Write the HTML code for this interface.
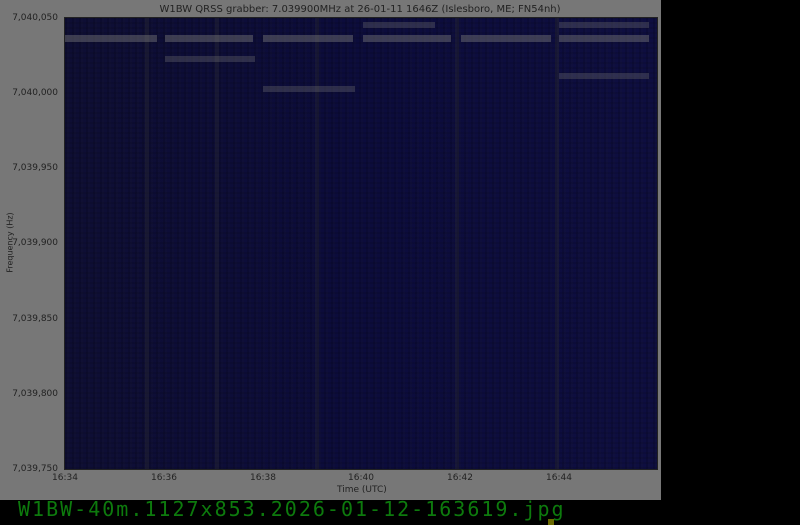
<!DOCTYPE html>
<html><head><meta charset="utf-8"><style>
html,body{margin:0;padding:0;background:#000;width:800px;height:525px;overflow:hidden;font-family:"DejaVu Sans","Liberation Sans",sans-serif}
#panel{position:absolute;left:0;top:0;width:661px;height:500px;background:#777}
#plot{position:absolute;left:64px;top:17px;width:592px;height:451px;border:1px solid #222;overflow:hidden;
background-image:repeating-linear-gradient(90deg,rgba(0,0,0,0.12) 0 2px,rgba(40,40,40,0.08) 2px 4px,transparent 4px 7px),repeating-linear-gradient(0deg,rgba(0,0,0,0.1) 0 2px,transparent 2px 5px),linear-gradient(90deg,#0e0e34,#0c0c3c 50%,#0e0e40)}
.t{position:absolute;font-size:9px;color:#222}
.yl{position:absolute;left:0;width:58px;text-align:right;font-size:9px;color:#222}
.xl{position:absolute;top:473px;font-size:9px;color:#222;transform:translateX(-50%)}
.band{position:absolute;background:rgba(120,120,120,0.45);height:7px}
.vs{position:absolute;top:0;height:451px;width:4px;background:rgba(50,50,50,0.3)}
#fn{position:absolute;left:18px;top:497px;font-family:"DejaVu Sans Mono","Liberation Mono",monospace;font-size:20px;color:#0d7a0d;letter-spacing:2px}
</style></head><body>
<div id="panel">
<div class="t" style="left:0;width:720px;text-align:center;top:4px;font-size:10px">W1BW QRSS grabber: 7.039900MHz at 26-01-11 1646Z (Islesboro, ME; FN54nh)</div>
<div id="plot">
<div class="vs" style="left:80px"></div><div class="vs" style="left:150px"></div><div class="vs" style="left:250px"></div><div class="vs" style="left:390px"></div><div class="vs" style="left:490px"></div>
<div class="band" style="left:0;top:17px;width:92px"></div>
<div class="band" style="left:100px;top:17px;width:88px"></div>
<div class="band" style="left:198px;top:17px;width:90px"></div>
<div class="band" style="left:298px;top:17px;width:88px"></div>
<div class="band" style="left:396px;top:17px;width:90px"></div>
<div class="band" style="left:494px;top:17px;width:90px"></div>
<div class="band" style="left:298px;top:4px;width:72px;height:6px;opacity:.7"></div>
<div class="band" style="left:494px;top:4px;width:90px;height:6px;opacity:.7"></div>
<div class="band" style="left:100px;top:38px;width:90px;height:6px;opacity:.7"></div>
<div class="band" style="left:198px;top:68px;width:92px;height:6px;opacity:.7"></div>
<div class="band" style="left:494px;top:55px;width:90px;height:6px;opacity:.7"></div>
</div>
<div class="yl" style="top:13px">7,040,050</div>
<div class="yl" style="top:88px">7,040,000</div>
<div class="yl" style="top:163px">7,039,950</div>
<div class="yl" style="top:238px">7,039,900</div>
<div class="yl" style="top:314px">7,039,850</div>
<div class="yl" style="top:389px">7,039,800</div>
<div class="yl" style="top:464px">7,039,750</div>
<div class="xl" style="left:65px">16:34</div>
<div class="xl" style="left:164px">16:36</div>
<div class="xl" style="left:263px">16:38</div>
<div class="xl" style="left:361px">16:40</div>
<div class="xl" style="left:460px">16:42</div>
<div class="xl" style="left:559px">16:44</div>
<div class="t" style="left:337px;top:485px">Time (UTC)</div>
<div class="t" style="left:-20px;top:238px;transform:rotate(-90deg);font-size:8px">Frequency (Hz)</div>
</div>
<div id="fn">W1BW-40m.1127x853.2026-01-12-163619.jpg</div>
<div style="position:absolute;left:548px;top:519px;width:6px;height:6px;background:#6a6a00"></div>
</body></html>
